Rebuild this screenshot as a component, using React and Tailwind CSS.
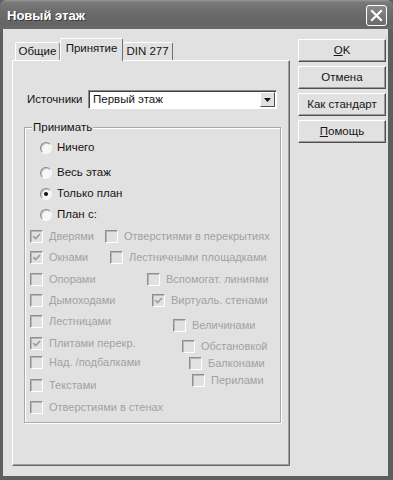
import React from "react";

function Check({ checked }) {
  return (
    <span className="w-[13px] h-[13px] shrink-0 border border-t-[#8e8e8e] border-l-[#8e8e8e] border-b-white border-r-white bg-[#e1e1e1] shadow-[inset_1px_1px_0_#b8b8b8] flex items-center justify-center">
      {checked && (
        <svg width="9" height="9" viewBox="0 0 9 9">
          <path d="M1.2 4.2 L3.6 6.6 L8 2" stroke="#9d9d9d" strokeWidth="1.7" fill="none" />
        </svg>
      )}
    </span>
  );
}

function CheckItem({ label, checked }) {
  return (
    <div className="flex items-center h-[16px] gap-[6px] whitespace-nowrap text-[#a2a2a2]">
      <Check checked={checked} />
      <span>{label}</span>
    </div>
  );
}

function Radio({ label, selected, className = "" }) {
  return (
    <div className={"flex items-center h-[21px] gap-[5px] pl-[15px] text-[#151515] " + className}>
      <span className="w-[12px] h-[12px] rounded-full border border-t-[#8a8a8a] border-l-[#8a8a8a] border-b-[#f8f8f8] border-r-[#f8f8f8] bg-[#f6f6f6] shadow-[inset_1px_1px_0_#c4c4c4] flex items-center justify-center">
        {selected && <span className="w-[4px] h-[4px] rounded-full bg-[#111]" />}
      </span>
      <span>{label}</span>
    </div>
  );
}

function Btn({ children }) {
  return (
    <button className="h-[23px] w-full bg-[#e1e1e1] border border-t-white border-l-white border-r-[#505050] border-b-[#505050] shadow-[inset_-1px_-1px_0_#9a9a9a] text-[#151515] flex items-center justify-center text-[11.5px]">
      {children}
    </button>
  );
}

const rows = [
  { mt: "mt-[3px]", l: ["Дверями", true], r: ["Отверстиями в перекрытиях", false], rx: "ml-[0px]", ry: "mt-[0px]" },
  { mt: "mt-[5px]", l: ["Окнами", true], r: ["Лестничными площадками", false], rx: "ml-[5px]", ry: "mt-[0px]" },
  { mt: "mt-[6px]", l: ["Опорами", false], r: ["Вспомогат. линиями", false], rx: "ml-[42px]", ry: "mt-[0px]" },
  { mt: "mt-[5px]", l: ["Дымоходами", false], r: ["Виртуаль. стенами", true], rx: "ml-[47px]", ry: "mt-[0px]" },
  { mt: "mt-[5px]", l: ["Лестницами", false], r: ["Величинами", false], rx: "ml-[68px]", ry: "mt-[4px]" },
  { mt: "mt-[6px]", l: ["Плитами перекр.", true], r: ["Обстановкой", false], rx: "ml-[77px]", ry: "mt-[3px]" },
  { mt: "mt-[3px]", l: ["Над. /подбалками", false], r: ["Балконами", false], rx: "ml-[84px]", ry: "mt-[1px]" },
  { mt: "mt-[7px]", l: ["Текстами", false], r: ["Перилами", false], rx: "ml-[87px]", ry: "mt-[-5px]" },
  { mt: "mt-[6px]", l: ["Отверстиями в стенах", false], r: null },
];

export default function App() {
  return (
    <div className="w-[393px] h-[480px] bg-[#5e5e5e] flex flex-col overflow-hidden font-['Liberation_Sans',Arial,sans-serif] text-[11px]">
      {/* Title bar */}
      <div className="h-[29px] shrink-0 flex items-center justify-between pl-[7px] pr-[6px] bg-[linear-gradient(#9a9a9a_0px,#7a7a7a_2px,#6c6c6c_12px,#646464_24px,#6a6a6a_29px)] rounded-t-[6px]">
        <span className="text-white font-bold text-[13px] [text-shadow:1px_1px_0_#3a3a3a] pt-[2px]">Новый этаж</span>
        <div className="w-[21px] h-[21px] rounded-[3px] border border-white bg-[linear-gradient(#8a8a8a,#6a6a6a)] flex items-center justify-center mt-[1px]">
          <svg width="13" height="13" viewBox="0 0 13 13">
            <path d="M2 2 L11 11 M11 2 L2 11" stroke="#fff" strokeWidth="2.2" strokeLinecap="square" />
          </svg>
        </div>
      </div>

      {/* Body */}
      <div className="flex-1 ml-[3px] mr-[5px] mb-[4px] bg-[#e1e1e1] flex pl-[9px] pt-[9px] gap-[8px]">
        {/* Left: tabs */}
        <div className="w-[278px] flex flex-col">
          <div className="h-[22px] flex items-end relative z-10 text-[11.5px]">
            <div className="ml-[3px] w-[45px] h-[18px] bg-[#e1e1e1] border border-b-0 border-t-white border-l-white border-r-[#8a8a8a] rounded-t-[2px] flex items-center justify-center text-[#151515]">
              Общие
            </div>
            <div className="w-[63px] h-[23px] -mb-px bg-[#e1e1e1] border border-b-0 border-t-white border-l-white border-r-[#707070] rounded-t-[2px] flex items-center justify-center text-[#151515] pb-[2px]">
              Принятие
            </div>
            <div className="w-[50px] h-[18px] bg-[#e1e1e1] border border-b-0 border-t-white border-l-0 border-r-[#707070] rounded-t-[2px] flex items-center justify-center text-[#151515]">
              DIN 277
            </div>
          </div>
          <div className="h-[406px] border border-t-white border-l-white border-r-[#6a6a6a] border-b-[#6a6a6a] shadow-[inset_-1px_-1px_0_#a0a0a0] pl-[11px] pt-[29px]">
            {/* Source select */}
            <div className="flex items-center h-[19px] text-[11.5px]">
              <span className="w-[64px] pl-[3px] text-[#151515]">Источники</span>
              <div className="w-[189px] h-[19px] bg-white border border-t-[#8a8a8a] border-l-[#8a8a8a] border-b-white border-r-white shadow-[inset_1px_1px_0_#404040] flex items-center justify-between pl-[4px] pr-[1px]">
                <span className="text-[#151515]">Первый этаж</span>
                <div className="w-[15px] h-[15px] bg-[#e1e1e1] border border-t-white border-l-white border-r-[#505050] border-b-[#505050] flex items-center justify-center">
                  <svg width="7" height="4" viewBox="0 0 7 4">
                    <path d="M0 0 H7 L3.5 4 Z" fill="#111" />
                  </svg>
                </div>
              </div>
            </div>

            {/* Group box */}
            <div className="relative mt-[18px] w-[257px] h-[296px] border border-[#a9a9a9] shadow-[inset_1px_1px_0_#fff,1px_1px_0_#fff] pt-[9px] pl-[5px]">
              <span className="absolute -top-[8px] left-[7px] px-[1px] bg-[#e1e1e1] text-[#151515] leading-[15px] text-[11.5px]">
                Принимать
              </span>
              <div className="-ml-[5px] text-[11.5px]">
                <Radio label="Ничего" className="h-[20px]" />
                <Radio label="Весь этаж" className="mt-[4px]" />
                <Radio label="Только план" selected />
                <Radio label="План с:" />
              </div>
              {rows.map((row, i) => (
                <div key={i} className={"flex items-start h-[16px] " + row.mt}>
                  <div className="w-[75px] shrink-0 overflow-visible">
                    <CheckItem label={row.l[0]} checked={row.l[1]} />
                  </div>
                  {row.r && (
                    <div className={row.rx + " " + row.ry}>
                      <CheckItem label={row.r[0]} checked={row.r[1]} />
                    </div>
                  )}
                </div>
              ))}
            </div>
          </div>
        </div>

        {/* Right: buttons */}
        <div className="w-[88px] flex flex-col gap-[4px] mt-[1px]">
          <Btn>
            <span><span className="underline">O</span>K</span>
          </Btn>
          <Btn>Отмена</Btn>
          <Btn>Как стандарт</Btn>
          <Btn>
            <span><span className="underline">П</span>омощь</span>
          </Btn>
        </div>
      </div>
    </div>
  );
}
